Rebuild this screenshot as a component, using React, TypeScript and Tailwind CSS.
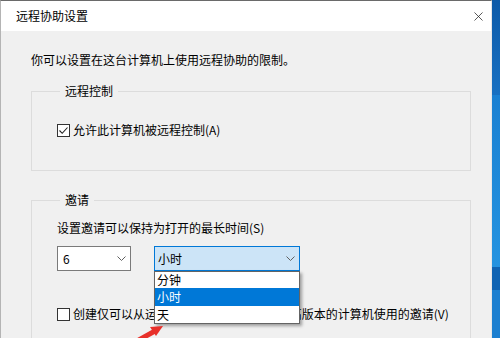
import { X } from 'lucide-react';

const font = { fontFamily: '"Noto Sans CJK SC", "Noto Sans", sans-serif' };

const Chevron = ({ className }: { className?: string }) => (
  <svg width="9" height="5" viewBox="0 0 9 5" className={className}>
    <path d="M0.5 0.5 L4.5 4.5 L8.5 0.5" fill="none" stroke="#606060" strokeWidth="1" />
  </svg>
);

const Checkbox = ({ checked }: { checked?: boolean }) => (
  <span className="w-[13px] h-[13px] border border-[#333] bg-white flex items-center justify-center shrink-0">
    {checked && (
      <svg width="11" height="11" viewBox="0 0 11 11">
        <path d="M1.5 5.5 L4.2 8.3 L9.5 2.5" fill="none" stroke="#222" strokeWidth="1.1" />
      </svg>
    )}
  </span>
);

export default function App() {
  return (
    <div className="w-[500px] h-[338px] overflow-hidden flex text-[12px] leading-4 text-black" style={font}>
      {/* dialog */}
      <div className="w-[492px] h-full flex flex-col bg-[#f0f0f0] border-t border-t-[#6a6a6a] border-l border-l-[#b4b4b4] border-r border-r-[#e6e6e6] relative">
        <div className="h-[30px] bg-white flex items-center justify-between pl-[15px] pr-[5px] shrink-0">
          <span className="text-[12px]">远程协助设置</span>
          <X className="w-[15px] h-[15px] text-[#222]" strokeWidth={1.2} />
        </div>

        <div className="pl-[30px] pr-[20px] pt-[21px]">
          <p>你可以设置在这台计算机上使用远程协助的限制。</p>

          {/* 远程控制 */}
          <fieldset className="mt-[15px] w-[440px] border border-[#dcdcdc] pl-[25px] pt-[23px] pb-[32px]">
            <legend className="ml-[3px] px-[5px]">远程控制</legend>
            <label className="flex items-center gap-[3px]">
              <Checkbox checked />
              <span>允许此计算机被远程控制(A)</span>
            </label>
          </fieldset>

          {/* 邀请 */}
          <fieldset className="mt-[21px] w-[440px] border border-[#dcdcdc] pl-[25px] pt-[12px] pb-[20px]">
            <legend className="ml-[3px] px-[5px]">邀请</legend>
            <p>设置邀请可以保持为打开的最长时间(S)</p>
            <div className="mt-[10px] flex items-center gap-[23px] relative z-10">
              <div className="w-[74px] h-[25px] bg-white border border-[#7a7a7a] flex items-center justify-between pl-[5px] pr-[4px]">
                <span>6</span>
                <Chevron />
              </div>
              <div className="relative">
                <div className="w-[146px] h-[25px] bg-[#cce4f7] border border-[#0078d7] flex items-center justify-between pl-[3px] pr-[4px]">
                  <span>小时</span>
                  <Chevron />
                </div>
                <div className="absolute left-0 top-full w-[146px] bg-white border border-[#646464] shadow-[2px_2px_3px_rgba(0,0,0,0.35)]">
                  <div className="h-[16px] flex items-center pl-[2px]">分钟</div>
                  <div className="h-[18px] flex items-center pl-[2px] bg-[#0078d7] text-white">小时</div>
                  <div className="h-[17px] flex items-center pl-[2px]">天</div>
                </div>
              </div>
            </div>
            <label className="mt-[35px] flex items-center gap-[3px] whitespace-nowrap">
              <Checkbox />
              <span>
                创建仅可以从运行 Windows Vista <span className="ml-[11px]">或更高版本的计算机使用的邀请(V)</span>
              </span>
            </label>
          </fieldset>
        </div>

        {/* red annotation arrow */}
        <svg className="absolute left-[128px] top-[318px] z-20" width="40" height="22" viewBox="0 0 40 22">
          <path d="M8 22 L26 12" stroke="#e8302a" strokeWidth="5" />
          <polygon points="34,7 21,8 27,17" fill="#e8302a" />
        </svg>
      </div>

      {/* desktop wallpaper */}
      <div className="flex-1 flex flex-col">
        <div className="h-[95px] bg-gradient-to-b from-[#0d5aa8] to-[#1870c2]" />
        <div className="h-[172px] bg-gradient-to-b from-[#1a80d2] to-[#2493e0]" />
        <div className="h-[23px] bg-[#0f63b3]" />
        <div className="flex-1 bg-[#1c7fd0]" />
      </div>
    </div>
  );
}
